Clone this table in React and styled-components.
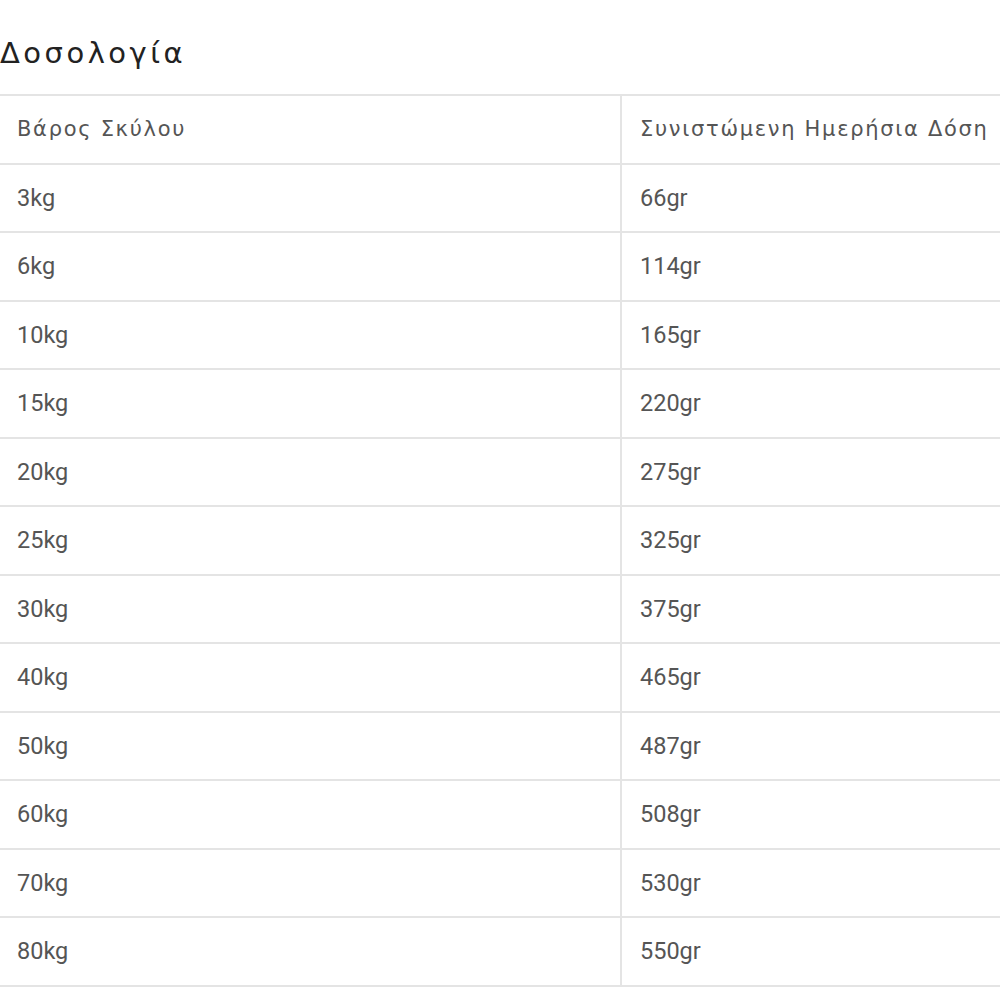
import styled, { createGlobalStyle } from "styled-components";

const GlobalStyle = createGlobalStyle`
  body {
    margin: 0;
    background: #fff;
    font-family: "DejaVu Sans", "Open Sans", sans-serif;
    overflow: hidden;
  }
`;

const Section = styled.section`
  width: 1300px;
`;

const Title = styled.h2`
  margin: 0;
  height: 94px;
  padding-top: 33px;
  box-sizing: border-box;
  font-size: 29px;
  font-weight: 400;
  letter-spacing: 3.5px;
  line-height: 40px;
  color: #222;
`;

const Table = styled.div`
  display: grid;
  grid-template-columns: 620px 1fr;
  border-top: 2px solid #e4e4e4;
`;

const Cell = styled.div`
  height: 68.5px;
  box-sizing: border-box;
  display: flex;
  align-items: center;
  padding-left: ${(p) => (p.$right ? "18px" : "17px")};
  border-bottom: 2px solid #e4e4e4;
  border-left: ${(p) => (p.$right ? "2px solid #e4e4e4" : "none")};
  font-family: ${(p) => (p.$num ? "Roboto, sans-serif" : "inherit")};
  font-size: ${(p) => (p.$num ? "23.5px" : "21px")};
  letter-spacing: ${(p) => (p.$num ? "0" : "1.7px")};
  color: #555;
`;

const rows = [
  ["3kg", "66gr"],
  ["6kg", "114gr"],
  ["10kg", "165gr"],
  ["15kg", "220gr"],
  ["20kg", "275gr"],
  ["25kg", "325gr"],
  ["30kg", "375gr"],
  ["40kg", "465gr"],
  ["50kg", "487gr"],
  ["60kg", "508gr"],
  ["70kg", "530gr"],
  ["80kg", "550gr"],
];

export default function App() {
  return (
    <>
      <GlobalStyle />
      <Section>
        <Title>Δοσολογία</Title>
        <Table>
          <Cell>Βάρος Σκύλου</Cell>
          <Cell $right>Συνιστώμενη Ημερήσια Δόση</Cell>
          {rows.map(([w, d]) => [
            <Cell key={w} $num>{w}</Cell>,
            <Cell key={w + "d"} $right $num>{d}</Cell>,
          ])}
        </Table>
      </Section>
    </>
  );
}
